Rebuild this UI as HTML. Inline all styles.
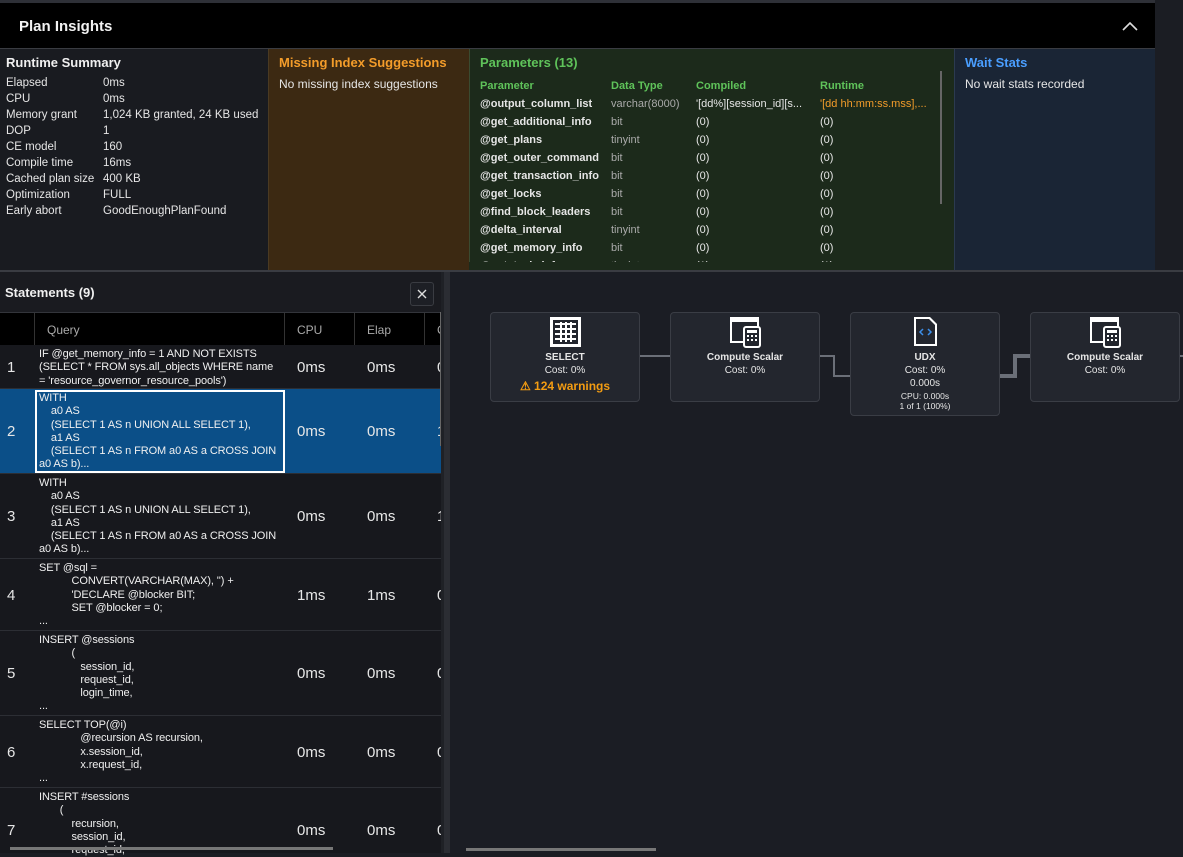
<!DOCTYPE html>
<html><head><meta charset="utf-8"><style>
*{margin:0;padding:0;box-sizing:border-box}
body{width:1183px;height:853px;background:#1b1d23;font-family:"Liberation Sans",sans-serif;color:#e6e6e6;position:relative;overflow:hidden;font-size:12px}
.a{position:absolute}
.hdr{left:0;top:3px;width:1155px;height:46px;background:#000;border-bottom:1px solid #3a3c42}
.panel{top:49px;height:221px}
.kv{line-height:16px;font-size:11.5px}
.kv span{display:inline-block;width:97px}
.pt td{font-size:11px;height:18px;padding:0;white-space:nowrap}
.row{left:0;width:441px;border-bottom:1px solid #2c2e34;background:#17181d}
.num{position:absolute;left:7px;font-size:15px}
.q{position:absolute;left:39px;font-size:11px;line-height:13.3px;white-space:pre;color:#f0f0f0;letter-spacing:-0.1px}
.ms{position:absolute;font-size:15px}
.node{background:#23262e;border:1px solid #3a3d45;border-radius:4px;text-align:center;font-size:10px;color:#e6e6e6}
.node svg{margin-top:3px}
.node b{display:block;font-size:10px;margin-top:1px}
</style></head><body>
<div class="a" style="left:0;top:0;width:1155px;height:3px;background:#2e3037"></div>
<div class="a hdr"><div class="a" style="left:19px;top:15px;font-size:15px;font-weight:bold;color:#f2f2f2">Plan Insights</div>
<svg class="a" style="left:1121px;top:17px" width="18" height="12"><path d="M2 10 L9 3 L16 10" stroke="#ddd" stroke-width="1.6" fill="none"/></svg></div>

<div class="a panel" style="left:0;width:268px;background:#191b20;padding:6px 6px">
<div style="font-size:13px;font-weight:bold;color:#f0f0f0;margin-bottom:5px">Runtime Summary</div>
<div class="kv"><span>Elapsed</span>0ms<br><span>CPU</span>0ms<br><span>Memory grant</span>1,024 KB granted, 24 KB used<br><span>DOP</span>1<br><span>CE model</span>160<br><span>Compile time</span>16ms<br><span>Cached plan size</span>400 KB<br><span>Optimization</span>FULL<br><span>Early abort</span>GoodEnoughPlanFound</div></div>
<div class="a panel" style="left:268px;width:201px;background:#3c2912;border-left:1px solid #4a3a22;padding:6px 10px">
<div style="font-size:13px;font-weight:bold;color:#f39c2a;margin-bottom:7px">Missing Index Suggestions</div>
<div style="font-size:12px">No missing index suggestions</div></div>
<div class="a panel" style="left:469px;width:485px;background:#1c2a1b;border-left:1px solid #3a4a30;padding:6px 10px;overflow:hidden">
<div style="font-size:13px;font-weight:bold;color:#5fc35a;margin-bottom:7px">Parameters (13)</div>
<table class="pt" style="border-collapse:collapse">
<tr style="color:#5fc35a;font-weight:bold"><td style="width:131px">Parameter</td><td style="width:85px">Data Type</td><td style="width:124px">Compiled</td><td>Runtime</td></tr>
<tr><td><b>@output_column_list</b></td><td style="color:#aaa">varchar(8000)</td><td>'[dd%][session_id][s...</td><td style="color:#f39c2a">'[dd hh:mm:ss.mss],...</td></tr>
<tr><td><b>@get_additional_info</b></td><td style="color:#aaa">bit</td><td>(0)</td><td>(0)</td></tr>
<tr><td><b>@get_plans</b></td><td style="color:#aaa">tinyint</td><td>(0)</td><td>(0)</td></tr>
<tr><td><b>@get_outer_command</b></td><td style="color:#aaa">bit</td><td>(0)</td><td>(0)</td></tr>
<tr><td><b>@get_transaction_info</b></td><td style="color:#aaa">bit</td><td>(0)</td><td>(0)</td></tr>
<tr><td><b>@get_locks</b></td><td style="color:#aaa">bit</td><td>(0)</td><td>(0)</td></tr>
<tr><td><b>@find_block_leaders</b></td><td style="color:#aaa">bit</td><td>(0)</td><td>(0)</td></tr>
<tr><td><b>@delta_interval</b></td><td style="color:#aaa">tinyint</td><td>(0)</td><td>(0)</td></tr>
<tr><td><b>@get_memory_info</b></td><td style="color:#aaa">bit</td><td>(0)</td><td>(0)</td></tr>
<tr><td><b>@get_task_info</b></td><td style="color:#aaa">tinyint</td><td>(1)</td><td>(1)</td></tr>
</table>
<div class="a" style="left:470px;top:22px;width:2px;height:133px;background:#666"></div></div>
<div class="a" style="left:469px;top:262px;width:485px;height:8px;background:#1c2a1b"></div>
<div class="a panel" style="left:954px;width:201px;background:#1a2535;border-left:1px solid #2b3a50;padding:6px 10px">
<div style="font-size:13px;font-weight:bold;color:#4a9eff;margin-bottom:7px">Wait Stats</div>
<div style="font-size:12px">No wait stats recorded</div></div>
<div class="a" style="left:0;top:270px;width:1183px;height:2px;background:#3a3c42"></div>

<!-- statements -->
<div class="a" style="left:0;top:272px;width:444px;height:581px;background:#1a1b20;overflow:hidden">
<div class="a" style="left:5px;top:13px;font-size:13px;font-weight:bold;color:#f0f0f0">Statements (9)</div>
<div class="a" style="left:410px;top:10px;width:24px;height:24px;border:1px solid #3a3c42;border-radius:3px;background:#1d1f25"><svg width="22" height="22"><path d="M7 7L15 15M15 7L7 15" stroke="#ddd" stroke-width="1.4"/></svg></div>
<div class="a" style="left:0;top:40px;width:441px;height:1px;background:#33353b"></div>
<div class="a" style="left:0;top:41px;width:441px;height:33px;background:#000;color:#aaa;font-size:12px">
<div class="a" style="left:34px;top:0;width:1px;height:33px;background:#333"></div>
<div class="a" style="left:47px;top:10px">Query</div>
<div class="a" style="left:284px;top:0;width:1px;height:33px;background:#333"></div><div class="a" style="left:297px;top:10px">CPU</div>
<div class="a" style="left:354px;top:0;width:1px;height:33px;background:#333"></div><div class="a" style="left:367px;top:10px">Elap</div>
<div class="a" style="left:424px;top:0;width:1px;height:33px;background:#333"></div><div class="a" style="left:437px;top:10px">C</div></div>
</div>
<div class="a row" style="top:345px;height:44px"><div class="num" style="top:14px">1</div><div class="q" style="top:3px">IF @get_memory_info = 1 AND NOT EXISTS
(SELECT * FROM sys.all_objects WHERE name
= 'resource_governor_resource_pools')</div><div class="ms" style="left:297px;top:14px">0ms</div><div class="ms" style="left:367px;top:14px">0ms</div><div class="ms" style="left:437px;top:14px">0</div></div>
<div class="a row" style="top:389px;height:85px;background:#0b4f88"><div class="num" style="top:34px">2</div><div class="a" style="left:35px;top:1px;width:250px;height:83px;border:2px solid #fff"></div><div class="q" style="top:3px">WITH
    a0 AS
    (SELECT 1 AS n UNION ALL SELECT 1),
    a1 AS
    (SELECT 1 AS n FROM a0 AS a CROSS JOIN
a0 AS b)...</div><div class="ms" style="left:297px;top:34px">0ms</div><div class="ms" style="left:367px;top:34px">0ms</div><div class="ms" style="left:437px;top:34px">1</div></div>
<div class="a row" style="top:474px;height:85px"><div class="num" style="top:34px">3</div><div class="q" style="top:3px">WITH
    a0 AS
    (SELECT 1 AS n UNION ALL SELECT 1),
    a1 AS
    (SELECT 1 AS n FROM a0 AS a CROSS JOIN
a0 AS b)...</div><div class="ms" style="left:297px;top:34px">0ms</div><div class="ms" style="left:367px;top:34px">0ms</div><div class="ms" style="left:437px;top:34px">1</div></div>
<div class="a row" style="top:559px;height:72px"><div class="num" style="top:28px">4</div><div class="q" style="top:3px">SET @sql =
           CONVERT(VARCHAR(MAX), '') +
           'DECLARE @blocker BIT;
           SET @blocker = 0;
...</div><div class="ms" style="left:297px;top:28px">1ms</div><div class="ms" style="left:367px;top:28px">1ms</div><div class="ms" style="left:437px;top:28px">0</div></div>
<div class="a row" style="top:631px;height:85px"><div class="num" style="top:34px">5</div><div class="q" style="top:3px">INSERT @sessions
           (
              session_id,
              request_id,
              login_time,
...</div><div class="ms" style="left:297px;top:34px">0ms</div><div class="ms" style="left:367px;top:34px">0ms</div><div class="ms" style="left:437px;top:34px">0</div></div>
<div class="a row" style="top:716px;height:72px"><div class="num" style="top:28px">6</div><div class="q" style="top:3px">SELECT TOP(@i)
              @recursion AS recursion,
              x.session_id,
              x.request_id,
...</div><div class="ms" style="left:297px;top:28px">0ms</div><div class="ms" style="left:367px;top:28px">0ms</div><div class="ms" style="left:437px;top:28px">0</div></div>
<div class="a row" style="top:788px;height:65px;border:none"><div class="num" style="top:34px">7</div><div class="q" style="top:3px">INSERT #sessions
       (
           recursion,
           session_id,
           request_id,</div><div class="ms" style="left:297px;top:34px">0ms</div><div class="ms" style="left:367px;top:34px">0ms</div><div class="ms" style="left:437px;top:34px">0</div></div>
<div class="a" style="left:440px;top:312px;width:2px;height:134px;background:#666"></div>
<div class="a" style="left:10px;top:847px;width:323px;height:3px;background:#777"></div>
<div class="a" style="left:444px;top:272px;width:6px;height:581px;background:#2b2d33"></div>
<div class="a" style="left:441px;top:272px;width:3px;height:581px;background:#1f2126"></div>

<!-- plan -->
<div class="a" style="left:450px;top:272px;width:733px;height:581px;background:#1b1d24"></div>
<div class="a" style="left:466px;top:848px;width:190px;height:3px;background:#777"></div>
<svg class="a" style="left:450px;top:272px" width="733" height="581">
<path d="M189 84 H220 M369 84 H384 V104 H400 M729 84 H733" stroke="#6b6f78" stroke-width="2" fill="none"/>
<path d="M549 104 H565 V84 H580" stroke="#6b6f78" stroke-width="4" fill="none"/>
</svg>
<div class="a node" style="left:490px;top:312px;width:150px;height:90px">
<svg width="33" height="32"><rect x="1.5" y="1.5" width="30" height="29" fill="#fff" stroke="#fff"/><rect x="4" y="4" width="25" height="24" fill="#23262e"/><g fill="#fff"><rect x="6" y="7" width="21" height="2"/><rect x="6" y="12" width="21" height="2"/><rect x="6" y="17" width="21" height="2"/><rect x="6" y="22" width="21" height="2"/><rect x="11" y="6" width="2" height="20"/><rect x="16" y="6" width="2" height="20"/><rect x="21" y="6" width="2" height="20"/></g></svg>
<b>SELECT</b><div style="margin-top:2px">Cost: 0%</div><div style="color:#f39c12;font-size:12px;font-weight:bold;margin-top:3px">⚠ 124 warnings</div></div>
<div class="a node" style="left:670px;top:312px;width:150px;height:90px">
<svg width="33" height="32"><rect x="1" y="1" width="29" height="26" fill="#fff"/><rect x="3" y="6" width="25" height="19" fill="#23262e"/><rect x="15" y="11" width="16" height="20" rx="2" fill="#23262e" stroke="#fff" stroke-width="2"/><g fill="#fff"><rect x="18" y="14" width="10" height="3"/><rect x="18" y="19" width="2" height="2"/><rect x="22" y="19" width="2" height="2"/><rect x="26" y="19" width="2" height="2"/><rect x="18" y="23" width="2" height="2"/><rect x="22" y="23" width="2" height="2"/><rect x="26" y="23" width="2" height="2"/></g></svg>
<b>Compute Scalar</b><div style="margin-top:2px">Cost: 0%</div></div>
<div class="a node" style="left:850px;top:312px;width:150px;height:104px">
<svg width="33" height="32"><path d="M5 1 H21 L28 8 V30 H5 Z" fill="#fff"/><path d="M7 3 H20 L26 9 V28 H7 Z" fill="#23262e"/><path d="M14 13 L11 16 L14 19 M19 13 L22 16 L19 19" stroke="#3d8ee8" stroke-width="1.5" fill="none"/></svg>
<b>UDX</b><div style="margin-top:2px">Cost: 0%</div><div style="margin-top:2px">0.000s</div><div style="font-size:8.5px;margin-top:2px">CPU: 0.000s</div><div style="font-size:8.5px">1 of 1 (100%)</div></div>
<div class="a node" style="left:1030px;top:312px;width:150px;height:90px">
<svg width="33" height="32"><rect x="1" y="1" width="29" height="26" fill="#fff"/><rect x="3" y="6" width="25" height="19" fill="#23262e"/><rect x="15" y="11" width="16" height="20" rx="2" fill="#23262e" stroke="#fff" stroke-width="2"/><g fill="#fff"><rect x="18" y="14" width="10" height="3"/><rect x="18" y="19" width="2" height="2"/><rect x="22" y="19" width="2" height="2"/><rect x="26" y="19" width="2" height="2"/><rect x="18" y="23" width="2" height="2"/><rect x="22" y="23" width="2" height="2"/><rect x="26" y="23" width="2" height="2"/></g></svg>
<b>Compute Scalar</b><div style="margin-top:2px">Cost: 0%</div></div>
</body></html>
